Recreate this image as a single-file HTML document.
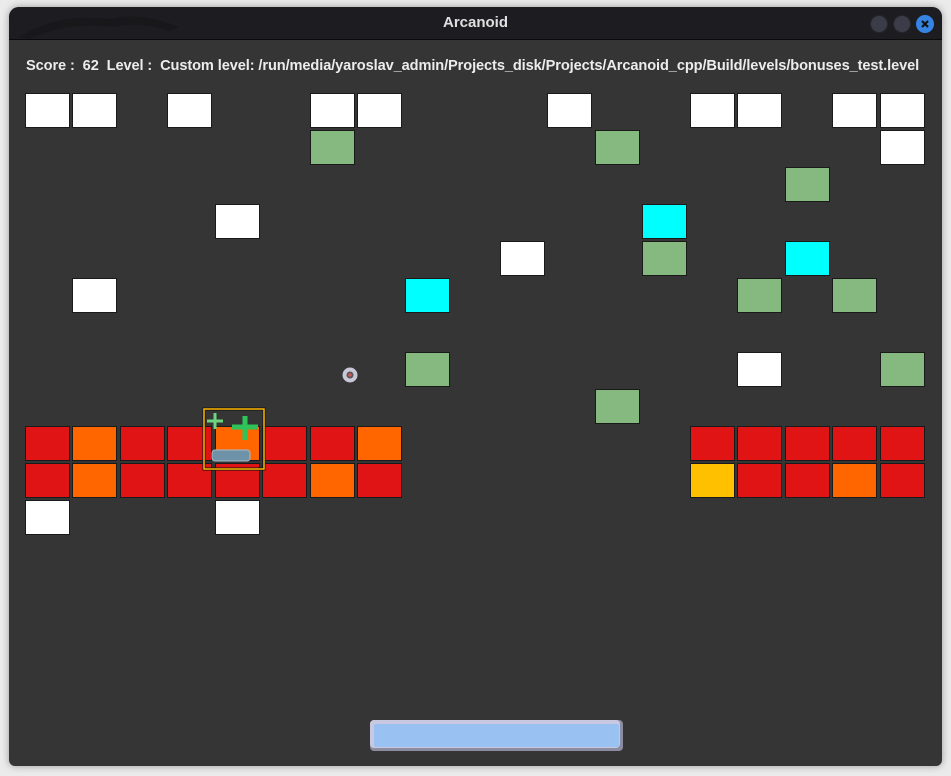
<!DOCTYPE html>
<html><head><meta charset="utf-8"><style>
body{margin:0;width:951px;height:776px;background:#ebebeb;position:relative;overflow:hidden;font-family:"Liberation Sans",sans-serif}
.win{position:absolute;left:9px;top:7px;width:933px;height:759px;background:#353535;border-radius:10px 10px 6px 6px;overflow:hidden;box-shadow:0 0 8px rgba(0,0,0,.35)}
.tb{position:absolute;left:0;top:0;width:933px;height:32px;background:#1d1d21;border-bottom:1px solid #0b0b0b}
.tt{position:absolute;left:0;width:933px;top:7px;text-align:center;color:#e0e0e0;font-weight:bold;font-size:15px}
.c{position:absolute;top:8px;width:16px;height:16px;border-radius:50%;background:#3a3d48;border:1px solid #25262b}
.hud{position:absolute;left:26px;top:58px;color:#ececec;font-weight:bold;font-size:14.6px;white-space:pre;letter-spacing:-0.1px}
.b{position:absolute;width:45px;height:35px;box-sizing:border-box;border:1px solid #1a1a1a}
.w{background:#fff}.g{background:#86b97f}.cy{background:#00ffff}.r{background:#e01414}.o{background:#ff6600}.y{background:#ffc000}
</style></head><body>
<div class="win"><div class="tb">
<svg style="position:absolute;left:10px;top:0" width="170" height="32"><path d="M0 30 Q40 5 90 12 Q120 4 160 20 L150 24 Q120 14 95 20 Q50 14 10 32Z" fill="#18181b"/></svg>
<div class="tt">Arcanoid</div>
<div class="c" style="left:861px"></div><div class="c" style="left:884px"></div>
<div class="c" style="left:907px;background:#3584e4;border-color:#3584e4"><svg width="16" height="16"><path d="M5 5L11 11M11 5L5 11" stroke="#111" stroke-width="2.2"/></svg></div>
</div></div>
<div class="hud">Score :  62  Level :  Custom level: /run/media/yaroslav_admin/Projects_disk/Projects/Arcanoid_cpp/Build/levels/bonuses_test.level</div>

<div class="b w" style="left:25px;top:93px"></div><div class="b w" style="left:72px;top:93px"></div><div class="b w" style="left:167px;top:93px"></div><div class="b w" style="left:310px;top:93px"></div><div class="b w" style="left:357px;top:93px"></div><div class="b w" style="left:547px;top:93px"></div><div class="b w" style="left:690px;top:93px"></div><div class="b w" style="left:737px;top:93px"></div><div class="b w" style="left:832px;top:93px"></div><div class="b w" style="left:880px;top:93px"></div>
<div class="b g" style="left:310px;top:130px"></div><div class="b g" style="left:595px;top:130px"></div><div class="b w" style="left:880px;top:130px"></div>
<div class="b g" style="left:785px;top:167px"></div>
<div class="b w" style="left:215px;top:204px"></div><div class="b cy" style="left:642px;top:204px"></div>
<div class="b w" style="left:500px;top:241px"></div><div class="b g" style="left:642px;top:241px"></div><div class="b cy" style="left:785px;top:241px"></div>
<div class="b w" style="left:72px;top:278px"></div><div class="b cy" style="left:405px;top:278px"></div><div class="b g" style="left:737px;top:278px"></div><div class="b g" style="left:832px;top:278px"></div>
<div class="b g" style="left:405px;top:352px"></div><div class="b w" style="left:737px;top:352px"></div><div class="b g" style="left:880px;top:352px"></div>
<div class="b g" style="left:595px;top:389px"></div>
<div class="b r" style="left:25px;top:426px"></div><div class="b o" style="left:72px;top:426px"></div><div class="b r" style="left:120px;top:426px"></div><div class="b r" style="left:167px;top:426px"></div><div class="b o" style="left:215px;top:426px"></div><div class="b r" style="left:262px;top:426px"></div><div class="b r" style="left:310px;top:426px"></div><div class="b o" style="left:357px;top:426px"></div>
<div class="b r" style="left:690px;top:426px"></div><div class="b r" style="left:737px;top:426px"></div><div class="b r" style="left:785px;top:426px"></div><div class="b r" style="left:832px;top:426px"></div><div class="b r" style="left:880px;top:426px"></div>
<div class="b r" style="left:25px;top:463px"></div><div class="b o" style="left:72px;top:463px"></div><div class="b r" style="left:120px;top:463px"></div><div class="b r" style="left:167px;top:463px"></div><div class="b r" style="left:215px;top:463px"></div><div class="b r" style="left:262px;top:463px"></div><div class="b o" style="left:310px;top:463px"></div><div class="b r" style="left:357px;top:463px"></div>
<div class="b y" style="left:690px;top:463px"></div><div class="b r" style="left:737px;top:463px"></div><div class="b r" style="left:785px;top:463px"></div><div class="b o" style="left:832px;top:463px"></div><div class="b r" style="left:880px;top:463px"></div>
<div class="b w" style="left:25px;top:500px"></div><div class="b w" style="left:215px;top:500px"></div>

<svg style="position:absolute;left:0;top:0" width="951" height="776">
<rect x="204" y="409" width="60" height="60" fill="none" stroke="#111" stroke-width="3"/>
<rect x="204" y="409" width="60" height="60" fill="none" stroke="#ffb800" stroke-width="1.5"/>
<path d="M215 413V429M207 421H223" stroke="#6fd47f" stroke-width="3"/>
<path d="M245 416V440M232 427H258" stroke="#2ec45a" stroke-width="5"/>
<rect x="212" y="450" width="38" height="11" rx="3" fill="#6e93a8" stroke="#a5b9c8" stroke-width="1"/>
<circle cx="350" cy="375" r="7.5" fill="#c8c8d8"/><circle cx="350" cy="375" r="3.5" fill="#555"/><circle cx="350" cy="375" r="1.8" fill="#d05858"/>
<rect x="370" y="720" width="253" height="31" rx="4" fill="#8c8ca0"/>
<rect x="370" y="720" width="250" height="28" rx="4" fill="#c8c8e0"/>
<rect x="374" y="724" width="245" height="23" rx="2" fill="#99c1f1"/>
</svg>
</body></html>
